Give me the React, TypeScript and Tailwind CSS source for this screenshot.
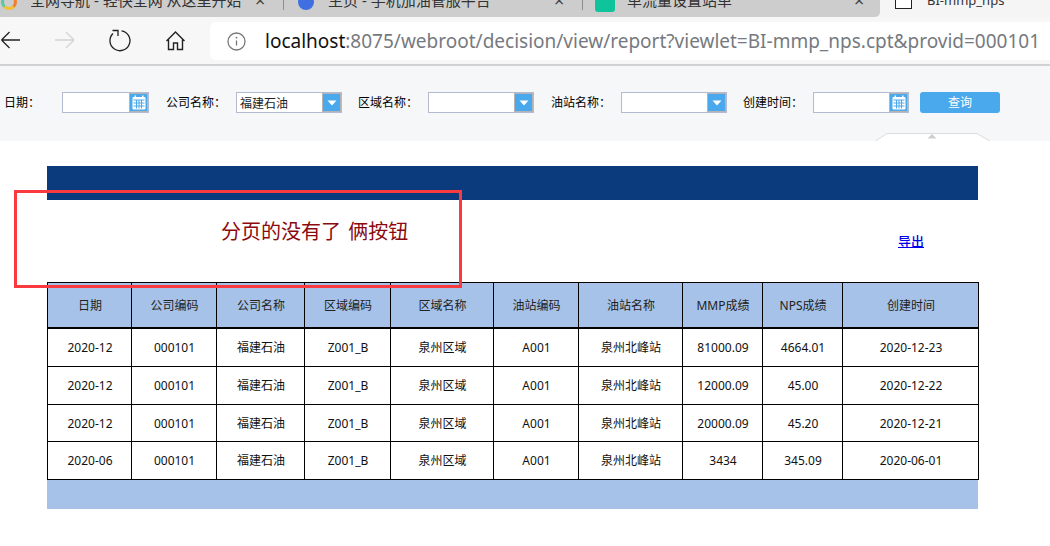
import React from "react";

const CJK = "font-['Noto_Sans','Noto_Sans_CJK_SC',sans-serif]";
const headers = ["日期","公司编码","公司名称","区域编码","区域名称","油站编码","油站名称","MMP成绩","NPS成绩","创建时间"];
const widths = ["w-[84px]","w-[85px]","w-[88px]","w-[86px]","w-[103px]","w-[85px]","w-[104px]","w-[80px]","w-[80px]","w-[136px]"];
const rows = [
  ["2020-12","000101","福建石油","Z001_B","泉州区域","A001","泉州北峰站","81000.09","4664.01","2020-12-23"],
  ["2020-12","000101","福建石油","Z001_B","泉州区域","A001","泉州北峰站","12000.09","45.00","2020-12-22"],
  ["2020-12","000101","福建石油","Z001_B","泉州区域","A001","泉州北峰站","20000.09","45.20","2020-12-21"],
  ["2020-06","000101","福建石油","Z001_B","泉州区域","A001","泉州北峰站","3434","345.09","2020-06-01"],
];
const rowH = ["h-[39px]","h-[38px]","h-[37px]","h-[38px]"];

function Calendar() {
  return (
    <svg width="14" height="15" viewBox="0 0 14 15" fill="none">
      <rect x="0.5" y="2" width="13" height="12.5" rx="1" fill="#fff" />
      <rect x="2.5" y="0.5" width="1.5" height="3" fill="#fff" />
      <rect x="10" y="0.5" width="1.5" height="3" fill="#fff" />
      <path d="M1.5 5h11M1.5 8h11M1.5 11h11M4.5 5v8.5M7 5v8.5M9.5 5v8.5" stroke="#4aa8ec" strokeWidth="1" />
    </svg>
  );
}
function Arrow() {
  return (
    <svg width="10" height="6" viewBox="0 0 10 6"><path d="M0.5 0.5h9L5 5.5z" fill="#fff" /></svg>
  );
}
function DateBox({ w, blue }: { w: string; blue: string }) {
  return (
    <div className={`flex h-[21px] ${w} border border-[#b4bad0] bg-white`}>
      <div className="flex-1" />
      <div className={`flex ${blue} items-center justify-center border-l border-white bg-[#4aa8ec] outline-1 -outline-offset-1 outline-[#b4b4b4]`}>
        <Calendar />
      </div>
    </div>
  );
}
function SelectBox({ w, text }: { w: string; text?: string }) {
  return (
    <div className={`flex h-[21px] ${w} border border-[#b4bad0] bg-white`}>
      <div className="flex-1 pl-[3px] text-[12px] leading-[21px] text-[#222]">{text}</div>
      <div className="flex w-[19px] items-center justify-center bg-[#4aa8ec] outline-1 -outline-offset-1 outline-[#b4b4b4]">
        <Arrow />
      </div>
    </div>
  );
}
function Label({ children, w }: { children: React.ReactNode; w: string }) {
  return <div className={`${w} text-[12px] leading-[21px] text-black`}>{children}</div>;
}

function Tab({ w, icon, iconBox, text, closeW, divider }: { w: string; icon: React.ReactNode; iconBox: string; text: string; closeW: string; divider?: boolean }) {
  return (
    <div className={`flex h-[17px] ${w} shrink-0`}>
      <div className="flex h-[16px] flex-1 -translate-y-[8px] items-center">
        <div className={`flex ${iconBox} shrink-0 translate-y-[2px]`}>{icon}</div>
        <div className="flex-1 whitespace-pre text-[15px] leading-[16px] text-[#333]">{text}</div>
        <div className={`${closeW} shrink-0 text-[18px] leading-[16px] text-[#444]`}>×</div>
      </div>
      {divider && <div className="h-[10px] w-px bg-[#8e8e8e]" />}
    </div>
  );
}

export default function App() {
  return (
    <div className={`relative h-[546px] w-[1050px] overflow-hidden bg-white ${CJK}`}>
      {/* tab strip */}
      <div className="flex h-[17px] overflow-hidden bg-[#f5f5f5]">
        <div className="flex h-[17px] w-[880px] rounded-br-[5px] bg-[#cdcdcd]">
          <Tab
            w="w-[284px]"
            iconBox="w-[30px] pl-[1px]"
            closeW="w-[28px]"
            divider
            text="全网导航 - 轻快全网 从这里开始"
            icon={
              <div className="h-[16px] w-[16px] rounded-full border-[3px] border-b-[#f2c230] border-l-[#5cc8a0] border-r-[#f08030] border-t-transparent" />
            }
          />
          <Tab
            w="w-[299px]"
            iconBox="w-[44px] pl-[14px]"
            closeW="w-[28px]"
            divider
            text="主页 - 手机加油管服平台"
            icon={<div className="h-[16px] w-[16px] rounded-full bg-[#3f6fe0]" />}
          />
          <Tab
            w="w-[297px]"
            iconBox="w-[44px] pl-[12px]"
            closeW="w-[26px]"
            text="单流量设置站单"
            icon={<div className="h-[20px] w-[20px] rounded-[3px] bg-[#0fc39a]" />}
          />
        </div>
        <div className="flex h-[16px] flex-1 -translate-y-[8px] items-center pl-[15px]">
          <div className="h-[15px] w-[17px] translate-y-[1px] border border-[#222] bg-white" />
          <div className="ml-[15px] text-[13px] leading-[16px] text-[#333]">BI-mmp_nps</div>
        </div>
      </div>

      {/* toolbar */}
      <div className="flex h-[49px] items-start border-b-2 border-[#d2d2d2] bg-[#f7f7f7]">
        <div className="flex h-[43px] w-[210px] items-center">
          <svg width="210" height="43" viewBox="0 0 210 43" fill="none" className="shrink-0">
            <path d="M20 23H1.5M1.5 23l8-8M1.5 23l8 8" stroke="#222" strokeWidth="1.3" />
            <path d="M55 23h19M74 23l-8-8M74 23l-8 8" stroke="#d4d4d4" strokeWidth="1.3" />
            <path d="M113 16.5A10 10 0 1 0 121.5 13.8" stroke="#222" strokeWidth="1.3" />
            <path d="M112.5 13.5H118V19" stroke="#222" strokeWidth="1.3" />
            <path d="M166.5 24l9-9 9 9M168.5 22v10.5h5v-6.5h4v6.5h5V22" stroke="#222" strokeWidth="1.4" />
          </svg>
        </div>
        <div className="mt-[5px] flex h-[38px] flex-1 items-center rounded-l-[6px] bg-white pl-[17px]">
          <svg width="19" height="19" viewBox="0 0 19 19" fill="none" className="shrink-0">
            <circle cx="9.5" cy="9.5" r="8.5" stroke="#777" strokeWidth="1.3" />
            <path d="M9.5 8.5v5" stroke="#777" strokeWidth="1.3" />
            <circle cx="9.5" cy="5.7" r="0.9" fill="#777" />
          </svg>
          <div className="ml-[19px] whitespace-nowrap text-[19px] text-[#767a80]">
            <span className="text-[#111]">localhost</span>:8075/webroot/decision/view/report?viewlet=BI-mmp_nps.cpt&amp;provid=000101
          </div>
        </div>
      </div>

      {/* parameter panel */}
      <div className="flex h-[75px] flex-col bg-[#f6f7f9]">
        <div className="mt-[26px] flex h-[21px] pl-[4px]">
          <Label w="w-[58px]">日期：</Label>
          <DateBox w="w-[87px]" blue="w-[19px]" />
          <div className="w-[17px]" />
          <Label w="w-[70px]">公司名称：</Label>
          <SelectBox w="w-[106px]" text="福建石油" />
          <div className="w-[16px]" />
          <Label w="w-[70px]">区域名称：</Label>
          <SelectBox w="w-[106px]" />
          <div className="w-[17px]" />
          <Label w="w-[70px]">油站名称：</Label>
          <SelectBox w="w-[106px]" />
          <div className="w-[16px]" />
          <Label w="w-[70px]">创建时间：</Label>
          <DateBox w="w-[96px]" blue="w-[19px]" />
          <div className="w-[11px]" />
          <div className="flex h-[21px] w-[80px] items-center justify-center rounded-[3px] bg-[#4aa8ec] pt-[1px] text-[12px] text-white">查询</div>
        </div>
        <div className="mt-[20px] flex h-[8px] justify-start pl-[875px]">
          <svg width="115" height="8" viewBox="0 0 115 8" fill="none">
            <path d="M0.5 8L12 0.5h90L114.5 8" fill="#fff" stroke="#dcdcdc" />
            <path d="M52.5 5.5L57 1l4.5 4.5z" fill="#cfcfcf" />
          </svg>
        </div>
      </div>

      {/* report */}
      <div className="pl-[47px] pt-[25px]">
        <div className="h-[34px] w-[931px] bg-[#0b3a7d]" />
        <div className="flex h-[82px] w-[931px]">
          <div className="w-[174px]" />
          <div className="mt-[18px] h-[28px] text-[20px] leading-[28px] text-[#8b0a0f] [word-spacing:2px]">分页的没有了 俩按钮</div>
          <div className="flex-1" />
          <a className="mt-[32px] mr-[54px] h-[18px] cursor-pointer text-[13px] leading-[18px] font-medium text-[#0000ee] underline">导出</a>
        </div>
        <table className="w-[931px] table-fixed border-collapse text-[12px] text-[#222]">
          <thead>
            <tr className="h-[45px] bg-[#a6c2e8]">
              {headers.map((h, i) => (
                <th key={h} className={`${widths[i]} border border-b-2 border-black p-0 pl-[1px] pt-[2px] text-center font-normal`}>{h}</th>
              ))}
            </tr>
          </thead>
          <tbody>
            {rows.map((r, ri) => (
              <tr key={ri} className={rowH[ri]}>
                {r.map((c, ci) => (
                  <td key={ci} className="border border-black p-0 pl-[1px] pt-[1px] text-center text-[#111]">{c}</td>
                ))}
              </tr>
            ))}
          </tbody>
        </table>
        <div className="h-[29px] w-[931px] bg-[#a6c2e8]" />
      </div>

      {/* annotation drawn over the page */}
      <div className="absolute left-[14px] top-[190px] h-[98px] w-[448px] border-[3px] border-[#fb3a3f]" />
    </div>
  );
}
